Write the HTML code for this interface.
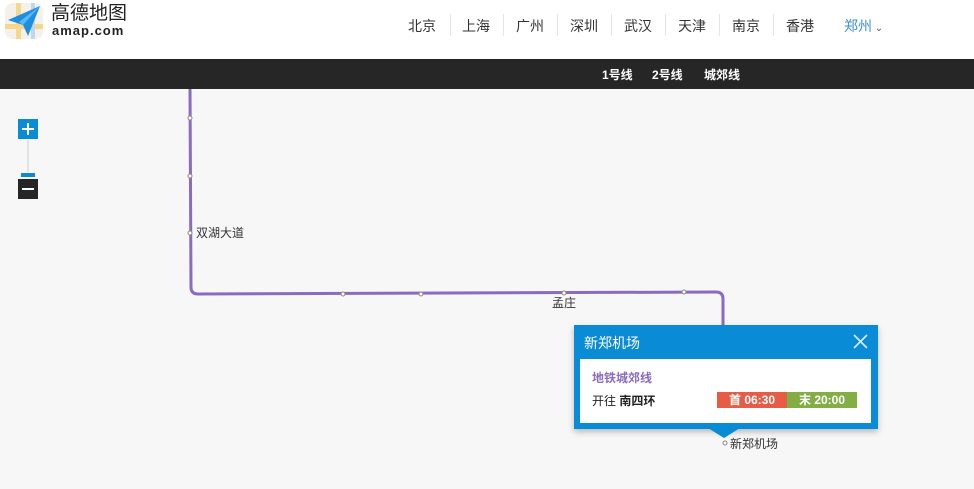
<!DOCTYPE html>
<html><head><meta charset="utf-8"><style>
*{margin:0;padding:0;box-sizing:border-box}
body{width:974px;height:489px;overflow:hidden;background:#f7f7f7;font-family:"Liberation Sans","Noto Sans CJK SC",sans-serif;position:relative}
.hdr{position:absolute;left:0;top:0;width:974px;height:59px;background:#fff}
.bar{position:absolute;left:0;top:59px;width:974px;height:30px;background:#262626;color:#fff;font-size:12px;font-weight:bold}
.bar span{position:absolute;top:7px}
.nav{position:absolute;top:16px;font-size:14px;color:#333}
.sep{position:absolute;top:14px;width:1px;height:22px;background:#e5e5e5}
.abs{position:absolute}
.lbl{position:absolute;font-size:12px;color:#333}
</style></head><body>
<div class="hdr">
<svg class="abs" style="left:4px;top:2px" width="40" height="38" viewBox="0 0 40 38">
<rect x="1" y="1" width="38" height="36" rx="8" fill="#f3f1ea"/>
<rect x="12" y="1" width="5" height="36" fill="#f6d88a"/>
<rect x="1" y="22" width="38" height="5" fill="#f6d88a"/>
<rect x="27" y="1" width="4" height="36" fill="#bcd9ef"/>
<path d="M4 18 L36 4 L24 34 L19 23 Z" fill="#1d8fe0"/>
<path d="M19 23 L36 4 L15 20 Z" fill="#5bb8f5"/>
</svg>
<div class="abs" style="left:51px;top:4px;font-size:19px;color:#222;letter-spacing:0px;line-height:20px">高德地图</div>
<div class="abs" style="left:52px;top:23px;font-size:13px;color:#222;font-weight:bold;letter-spacing:1px">amap.com</div>
<div class="nav" style="left:408px">北京</div><div class="sep" style="left:450px"></div>
<div class="nav" style="left:462px">上海</div><div class="sep" style="left:503px"></div>
<div class="nav" style="left:516px">广州</div><div class="sep" style="left:557px"></div>
<div class="nav" style="left:570px">深圳</div><div class="sep" style="left:611px"></div>
<div class="nav" style="left:624px">武汉</div><div class="sep" style="left:665px"></div>
<div class="nav" style="left:678px">天津</div><div class="sep" style="left:719px"></div>
<div class="nav" style="left:732px">南京</div><div class="sep" style="left:773px"></div>
<div class="nav" style="left:786px">香港</div>
<div class="nav" style="left:844px;color:#3b8ed8">郑州<span style="font-size:10px;color:#555"> ⌄</span></div>
</div>
<div class="bar"><span style="left:602px">1号线</span><span style="left:652px">2号线</span><span style="left:704px">城郊线</span></div>
<svg class="abs" style="left:0;top:89px" width="974" height="400">
<path d="M190 0 L191 198 Q191 205 198 205 L716 203 Q723 203 723 210 L723 236" stroke="#8a6bbf" stroke-width="3" fill="none"/>
<g fill="#fff" stroke="#888" stroke-width="1">
<circle cx="190" cy="29" r="2"/><circle cx="190" cy="87" r="2"/><circle cx="190" cy="144" r="2"/>
<circle cx="343" cy="205" r="2"/><circle cx="421" cy="205" r="2"/><circle cx="564" cy="204" r="2"/><circle cx="684" cy="203" r="2"/>
<circle cx="725" cy="354" r="2"/></g>
</svg>
<div class="abs" style="left:18px;top:119px;width:20px;height:20px;background:#0a8bd6"></div>
<div class="abs" style="left:22px;top:128px;width:12px;height:2px;background:#fff"></div>
<div class="abs" style="left:27px;top:123px;width:2px;height:12px;background:#fff"></div>
<div class="abs" style="left:27px;top:140px;width:2px;height:32px;background:#e3e3e3"></div>
<div class="abs" style="left:21px;top:173px;width:14px;height:4px;background:#0a8bd6"></div>
<div class="abs" style="left:18px;top:179px;width:20px;height:20px;background:#262626"></div>
<div class="abs" style="left:22px;top:188px;width:12px;height:2px;background:#fff"></div>
<div class="lbl" style="left:196px;top:224px">双湖大道</div>
<div class="lbl" style="left:552px;top:294px">孟庄</div>
<div class="lbl" style="left:730px;top:435px">新郑机场</div>
<div class="abs" style="left:574px;top:325px;width:304px;height:104px;background:#0a8bd6;box-shadow:0 3px 6px rgba(0,0,0,.25)"></div>
<div class="abs" style="left:708px;top:428px;width:0;height:0;border-left:16px solid transparent;border-right:16px solid transparent;border-top:10px solid #0a8bd6"></div>
<div class="abs" style="left:584px;top:333px;color:#fff;font-size:14px">新郑机场</div>
<svg class="abs" style="left:853px;top:334px" width="15" height="15"><path d="M1 1L14 14M14 1L1 14" stroke="#dbeefa" stroke-width="1.6"/></svg>
<div class="abs" style="left:580px;top:359px;width:291px;height:64px;background:#fff"></div>
<div class="abs" style="left:592px;top:369px;color:#8a6bbf;font-size:12px;font-weight:bold">地铁城郊线</div>
<div class="abs" style="left:592px;top:392px;color:#222;font-size:12px">开往 <b>南四环</b></div>
<div class="abs" style="left:717px;top:392px;width:70px;height:16px;background:#e75c45;color:#fff;font-size:12px;font-weight:bold;text-align:center;line-height:16px">首 06:30</div>
<div class="abs" style="left:787px;top:392px;width:70px;height:16px;background:#83ae43;color:#fff;font-size:12px;font-weight:bold;text-align:center;line-height:16px">末 20:00</div>
</body></html>
